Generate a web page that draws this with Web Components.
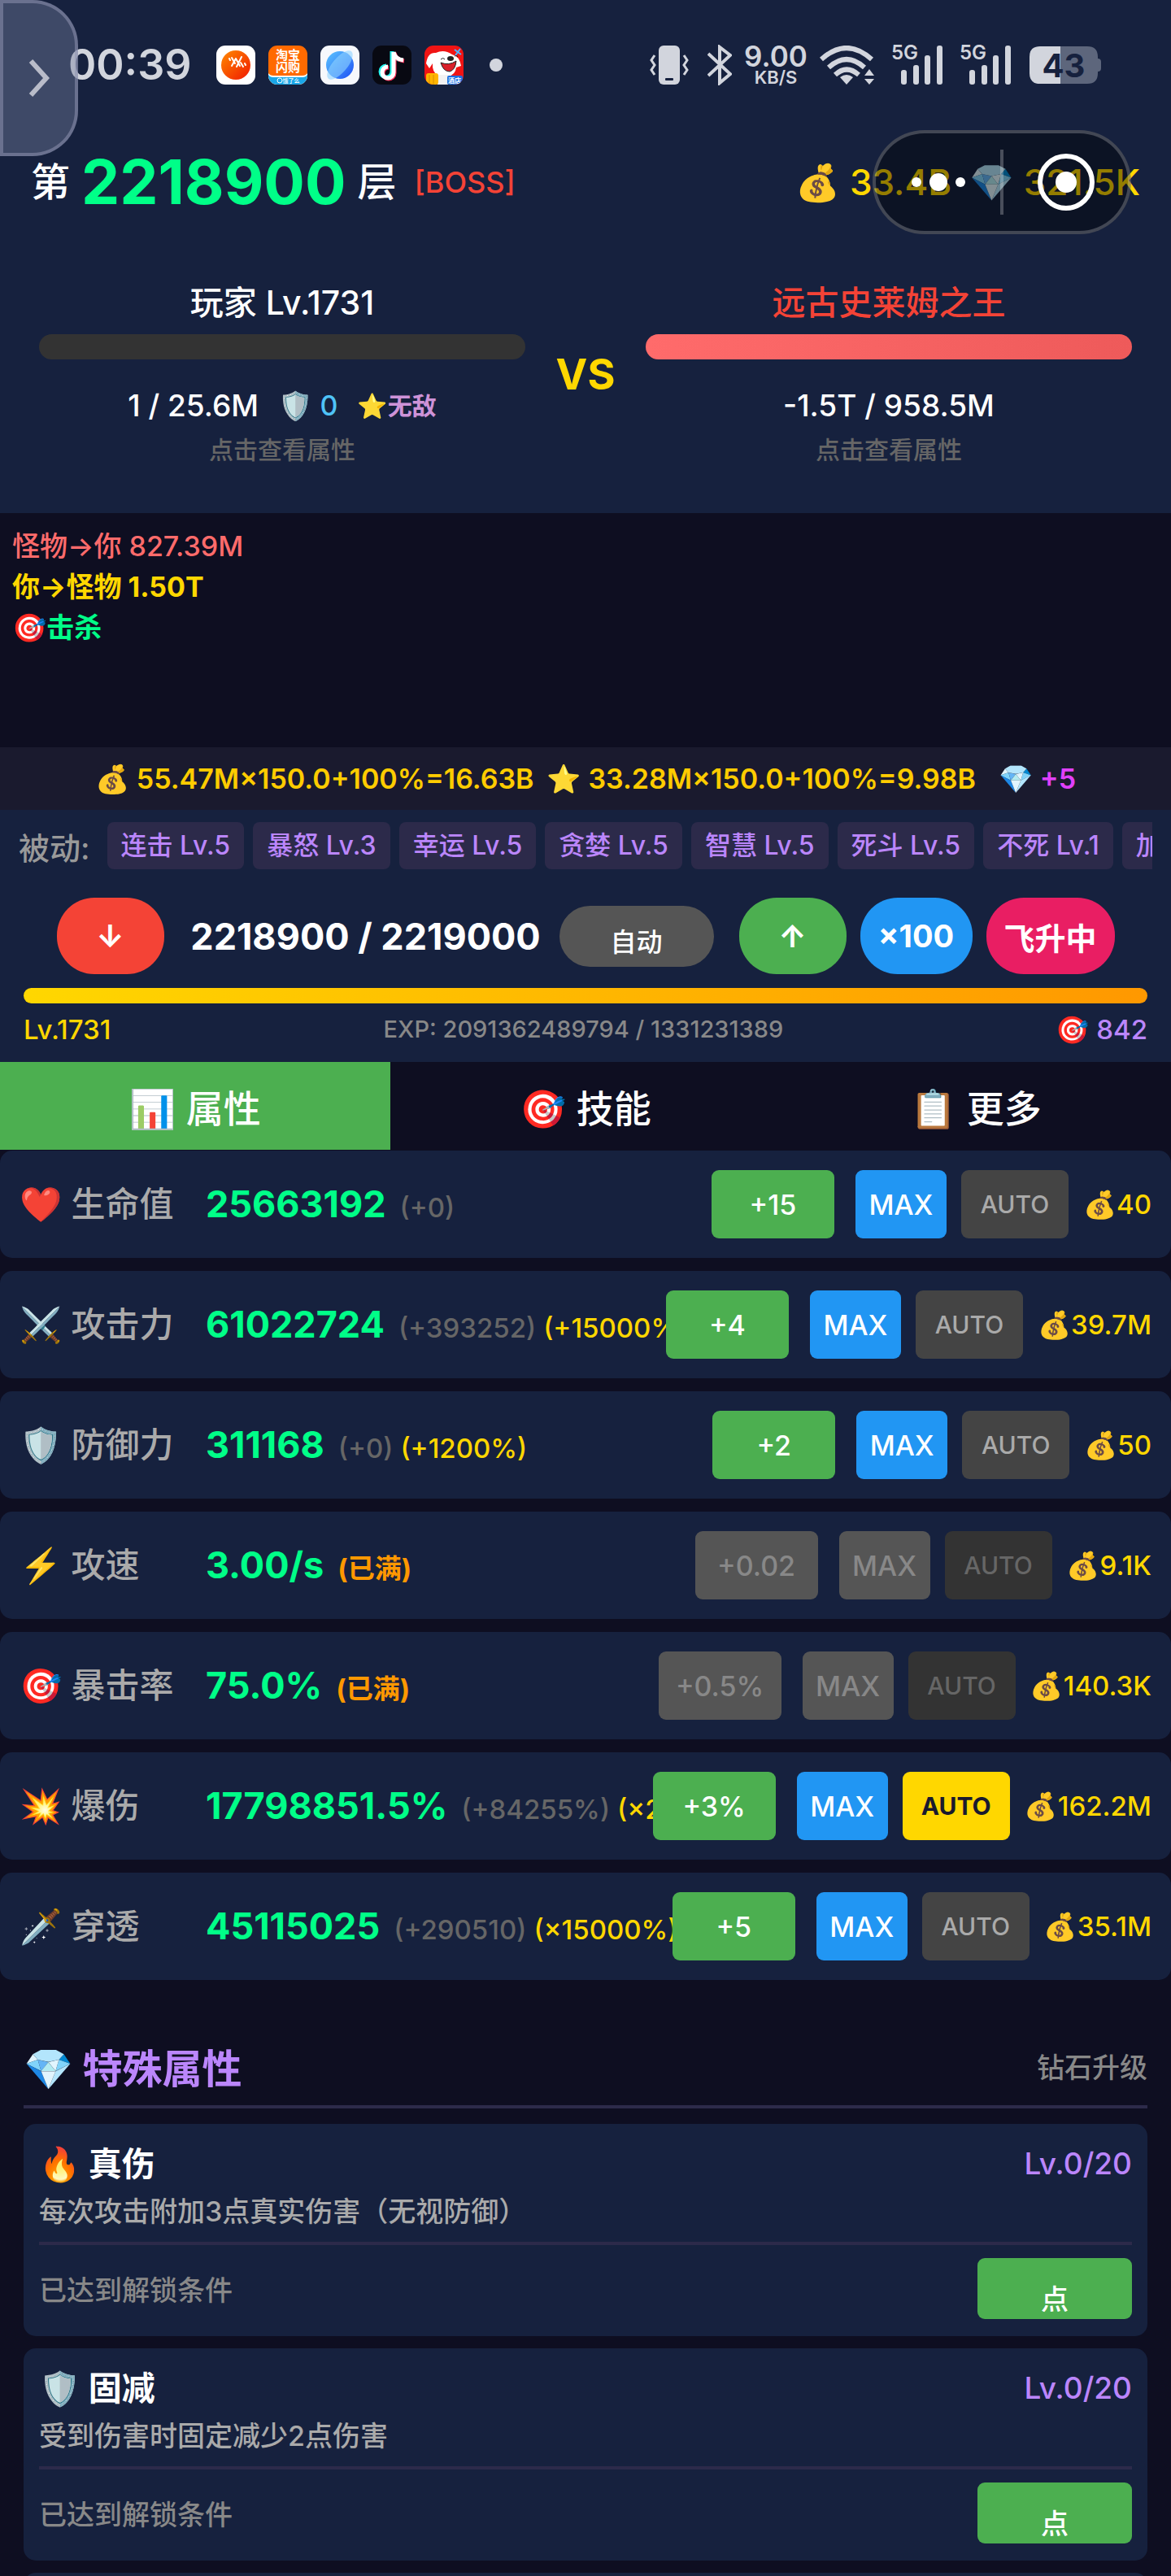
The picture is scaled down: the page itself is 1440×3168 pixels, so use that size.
<!DOCTYPE html>
<html lang="zh-CN">
<head>
<meta charset="utf-8">
<meta name="viewport" content="width=device-width, initial-scale=1">
<title>放置爬塔</title>
<style>
html, body { margin: 0; background: #0e0e21; }
body { font-family: Inter, "Noto Sans CJK SC", "Noto Color Emoji", sans-serif; font-weight: 500; color: #fff; }
</style>
</head>
<body>
<game-app></game-app>
<script>
const define = (name, html, setup) => {
  const tpl = document.createElement('template');
  tpl.innerHTML = `<style>*{box-sizing:border-box}button{font:inherit;color:inherit;border:0;margin:0;padding:0;cursor:pointer}</style>` + html;
  customElements.define(name, class extends HTMLElement {
    constructor() {
      super();
      this.attachShadow({ mode: 'open' }).append(tpl.content.cloneNode(true));
    }
    connectedCallback() { if (setup) setup(this, this.shadowRoot); }
  });
};

/* Phone status bar */
define('signal-bars', `
<style>
:host{display:block;position:relative;width:64px;height:48px}
span{position:absolute;left:0;top:-4px;font-size:24px;line-height:26px;font-weight:600}
svg{display:block}
</style>
<span>5G</span>
<svg width="64" height="48" viewBox="0 0 64 48" fill="currentColor"><rect x="12" y="30" width="7" height="18" rx="3"/><rect x="27" y="24" width="7" height="24" rx="3"/><rect x="41" y="12" width="7" height="36" rx="3"/><rect x="56" y="0" width="7" height="48" rx="3"/></svg>`);

define('app-icons', `
<style>
:host{display:flex;gap:16px;align-items:center}
svg{display:block;width:48px;height:48px;border-radius:11px}
text{font-family:"Noto Sans CJK SC",sans-serif;fill:#fff;text-anchor:middle}
i{width:16px;height:16px;border-radius:50%;background:#d2d5dd;margin-left:16px}
</style>
<svg viewBox="0 0 48 48"><defs><linearGradient id="a" x1="0" y1="0" x2="1" y2="1"><stop offset="0" stop-color="#ff8a00"/><stop offset="1" stop-color="#f01800"/></linearGradient></defs><rect width="48" height="48" fill="#fff"/><circle cx="24" cy="24" r="18" fill="url(#a)"/><path d="M16 16l1 2M19 15l4 7M24 16l5 9M19 25l5-9M25 26l6-12M30 21l3 5M35 22l1 2" stroke="#fff" stroke-width="2" stroke-linecap="round" fill="none"/></svg>
<svg viewBox="0 0 48 48"><rect width="48" height="48" fill="#ff6a00"/><path d="M0 34q2 3 6 3h36q4 0 6-3v14H0z" fill="#fff"/><path d="M0 36q2 3 6 3h36q4 0 6-3v12H0z" fill="#1aa7e8"/><text x="24" y="17" font-size="15" font-weight="700">淘宝</text><text x="24" y="32" font-size="15" font-weight="700">闪购</text><circle cx="14" cy="43" r="3" fill="none" stroke="#fff" stroke-width="1"/><text x="28" y="46" font-size="7">饿了么</text></svg>
<svg viewBox="0 0 48 48"><defs><linearGradient id="b" x1="0" y1="0" x2="1" y2="1"><stop offset="0" stop-color="#5cc6ff"/><stop offset="1" stop-color="#1d50f5"/></linearGradient></defs><rect width="48" height="48" fill="#f6f8fc"/><circle cx="24" cy="24" r="17" fill="url(#b)"/><ellipse cx="24" cy="24" rx="22" ry="9" transform="rotate(-50 24 24)" fill="#8fd3ff" opacity=".6"/></svg>
<svg viewBox="0 0 48 48"><rect width="48" height="48" fill="#080912"/><g fill="none" stroke-width="5"><path d="M24 7v25a7 7 0 1 1-7-7M24 8q2 9 12 10" stroke="#25f4ee"/><path d="M27 9v25a7 7 0 1 1-7-7M27 9q2 9 12 10" stroke="#fe2c55"/><path d="M26 8v25a7 7 0 1 1-7-7M26 8q2 9 12 10" stroke="#fff"/></g></svg>
<svg viewBox="0 0 48 48"><rect width="48" height="48" fill="#f01414"/><path d="M2 22Q4 8 14 9q10-5 20 2 9 2 11 14l-6 2q-1 9-10 11H17Q9 32 10 22l-4 6z" fill="#fff"/><path d="M20 21q10 4 19-2-1 11-8 13-8 0-11-11z" fill="#d9202a" stroke="#222"/><ellipse cx="32" cy="16" rx="4" ry="3" fill="#222"/><path d="M20 17q3-3 5 0M37 13q3-2 4 1" stroke="#222" fill="none"/><path d="M16 36h13v12H16z" fill="#f2f2f2"/><rect x="2" y="34" width="15" height="14" rx="3" fill="#ffb400"/><path d="M6 36v12M11 36v12" stroke="#d88c00"/><rect x="28" y="37" width="19" height="11" rx="2" fill="#1e6fe0"/><text x="37" y="46" font-size="8" font-weight="700">酒店</text><path d="M37 5l8 6M44 4l-6 8" stroke="#4db3ff" stroke-width="2"/></svg>
<i></i>`);

define('status-bar', `
<style>
:host{display:flex;align-items:center;justify-content:space-between;height:160px;padding:0 86px 0 84px;color:#d2d5dd}
.left,.right{display:flex;align-items:center}
time{font-size:52px;line-height:60px;font-weight:600;width:182px}
svg{display:block}
.speed{display:flex;flex-direction:column;align-items:center;font-weight:600;width:80px;margin:0 14px}
.speed b{font-size:35px;line-height:30px;font-weight:600}
.speed small{font-size:22px;line-height:22px}
signal-bars{margin-left:20px}
.battery{position:relative;margin-left:22px;width:88px;height:46px}
.battery span{position:absolute;inset:0 4px 0 0;display:flex;align-items:center;justify-content:center;font-size:40px;font-weight:700;color:#16213e}
</style>
<div class="left"><time>00:39</time><app-icons></app-icons></div>
<div class="right">
<svg width="50" height="48" viewBox="0 0 50 48"><rect x="12" width="26" height="48" rx="6" fill="currentColor"/><rect x="20" y="40" width="10" height="3" rx="1" fill="#16213e"/><path d="M7 12l-4 6 4 6-4 6 4 6M43 12l4 6-4 6 4 6-4 6" fill="none" stroke="currentColor" stroke-width="3"/></svg>
<svg style="margin-left:22px" width="30" height="50" viewBox="0 0 30 50"><path d="M1 11l27 25-13 11V3l13 10L1 38" fill="none" stroke="currentColor" stroke-width="4"/></svg>
<div class="speed"><b>9.00</b><small>KB/S</small></div>
<svg width="68" height="48" viewBox="0 0 68 48"><g fill="none" stroke="currentColor" stroke-width="6"><path d="M2 17q31-28 62 0"/><path d="M11 27q22-20 44 0"/><path d="M19 36q14-13 29 0"/></g><path d="M25 39q8-6 16 0l-8 9z" fill="currentColor"/><path d="M55 37l6-8 6 8zM55 41h12l-6 7z" fill="currentColor"/></svg>
<signal-bars></signal-bars><signal-bars></signal-bars>
<div class="battery"><svg width="88" height="46" viewBox="0 0 88 46"><path d="M38 0H13Q0 0 0 13v20q0 13 13 13h25z" fill="#d2d5dd"/><path d="M38 0h33q13 0 13 13v2q4 0 4 4v8q0 4-4 4v2q0 13-13 13H38z" fill="#5d667c"/></svg><span>43</span></div>
</div>`);

define('drawer-handle', `
<style>
:host{display:block;position:absolute;left:0;top:0}
button{display:flex;align-items:center;justify-content:center;width:96px;height:192px;border:4px solid rgba(143,148,176,.55);border-radius:0 56px 56px 0;background:rgba(120,128,160,.42)}
svg{display:block}
</style>
<button aria-label="展开"><svg width="26" height="48" viewBox="0 0 26 48"><path d="M3 3l19 21L3 45" fill="none" stroke="#b9bcc9" stroke-width="6"/></svg></button>`);

define('mini-capsule', `
<style>
:host{display:flex;position:absolute;right:49px;top:160px;width:318px;height:128px;border:4px solid rgba(255,255,255,.22);border-radius:64px;background:rgba(0,0,0,.42);align-items:center}
button{flex:1;height:80px;background:none;display:flex;align-items:center;justify-content:center}
button+button{border-left:4px solid rgba(255,255,255,.25)}
svg{display:block}
</style>
<button aria-label="菜单"><svg width="66" height="24" viewBox="0 0 66 24" fill="#fff"><circle cx="6" cy="12" r="6"/><circle cx="33" cy="12" r="11"/><circle cx="60" cy="12" r="6"/></svg></button>
<button aria-label="关闭"><svg width="70" height="70" viewBox="0 0 70 70"><circle cx="35" cy="35" r="32" fill="none" stroke="#fff" stroke-width="6"/><circle cx="35" cy="35" r="13" fill="#fff"/></svg></button>`);

define('stage-header', `
<style>
:host{display:flex;align-items:center;justify-content:space-between;height:128px;padding:0 38px}
.floor,.money{display:flex;align-items:center;white-space:pre}
.floor{font-size:48px;line-height:64px}
b{font-size:75px;margin:0 14px;color:#00ff88}
.boss{font-size:36px;color:#f44336;margin-left:22px}
.money{font-size:44px;color:#ffd700;gap:22px}
</style>
<div class="floor"><span>第</span><b>2218900</b><span>层</span><span class="boss">[BOSS]</span></div>
<div class="money"><span>💰 33.4B</span><span>💎 321.5K</span></div>`);

define('fighter-card', `
<style>
:host{display:flex;flex-direction:column;align-items:center;min-width:0}
.name{font-size:41px;line-height:50px}
:host([foe]) .name{color:#f44336}
.bar{align-self:stretch;height:31px;margin:14px 0 32px;border-radius:16px;background:#333;overflow:hidden}
:host([foe]) .bar{background:linear-gradient(90deg,#ff6b6b,#ee5a5a)}
.hp{display:flex;align-items:center;font-size:37px;line-height:50px;white-space:pre}
.hint{font-size:30px;line-height:40px;margin-top:9px;color:#666}
</style>
<div class="name"><slot name="name"></slot></div><div class="bar"></div><div class="hp"><slot></slot></div><div class="hint">点击查看属性</div>`);

define('battle-stage', `
<style>
:host{display:grid;grid-template-columns:1fr 148px 1fr;align-items:center;padding:59px 48px 58px}
.vs{text-align:center;font-size:52px;font-weight:700;color:#ffd700}
.sh{font-size:34px;color:#4fc3f7;margin-left:24px}
.inv{font-size:30px;font-weight:700;color:#ce93d8;margin-left:24px}
</style>
<fighter-card><span slot="name">玩家 Lv.1731</span>1 / 25.6M<span class="sh">🛡️ 0</span><span class="inv">⭐无敌</span></fighter-card>
<div class="vs">VS</div>
<fighter-card foe><span slot="name">远古史莱姆之王</span>-1.5T / 958.5M</fighter-card>`);

define('battle-log', `
<style>
:host{display:block;height:288px;padding:16px 16px 16px 15px;font-size:34px;line-height:50px;background:#0e0e21}
p{margin:0}.hit{color:#ff6b6b}.crit{color:#ffd700;font-weight:700}.kill{color:#00ff88;font-weight:700}
</style>
<p class="hit">怪物→你 827.39M</p><p class="crit">你→怪物 1.50T</p><p class="kill">🎯击杀</p>`);

define('reward-bar', `
<style>
:host{display:flex;justify-content:center;align-items:center;height:77px;background:#1a1a2e;color:#ffcc00;font-size:34px;font-weight:600;white-space:pre}
span+span{margin-left:16px}
span.gem{color:#e040fb;margin-left:28px}
</style>
<span>💰 55.47M×150.0+100%=16.63B</span><span>⭐ 33.28M×150.0+100%=9.98B</span><span class="gem">💎 +5</span>`);

define('passive-list', `
<style>
:host{display:flex;align-items:center;gap:11px;padding:15px 23px;overflow:hidden;white-space:nowrap;font-size:32px}
.label{font-size:38px;color:#999;margin-right:10px}
.chips{display:flex;gap:11px;overflow:hidden;flex:1}
.chips span{flex:none;height:58px;line-height:58px;padding:0 17px;border-radius:8px;background:#2c2a4a;color:#bb86fc}
</style>
<span class="label">被动:</span><div class="chips"></div>`, (el, root) => {
  root.querySelector('.chips').innerHTML = ['连击 Lv.5', '暴怒 Lv.3', '幸运 Lv.5', '贪婪 Lv.5', '智慧 Lv.5', '死斗 Lv.5', '不死 Lv.1', '加'].map(t => `<span>${t}</span>`).join('');
});

define('stage-controls', `
<style>
:host{display:flex;align-items:center;justify-content:center;padding-top:20px;gap:17px}
button{height:94px;width:132px;border-radius:46px;font-size:38px;font-weight:700;white-space:nowrap}
b{width:432px;margin:0 5px 0 15px;font-size:45px;text-align:center;white-space:nowrap}
.down{background:#f44336}
.auto{width:190px;height:75px;padding-top:10px;border-radius:38px;background:#555;font-size:32px;font-weight:500;margin-right:14px}
.up{background:#4caf50}.x{width:138px;background:#2196f3}.fly{width:158px;background:#e91e63}
</style>
<button class="down">↓</button><b>2218900 / 2219000</b><button class="auto">自动</button><button class="up">↑</button><button class="x">×100</button><button class="fly">飞升中</button>`);

define('exp-bar', `
<style>
:host{display:block;padding:17px 29px 20px}
.track{height:19px;border-radius:10px;background:linear-gradient(90deg,#ffd700,#ff9800);margin-bottom:12px}
.row{display:flex;justify-content:space-between;align-items:center;font-size:33px;line-height:40px;color:#ffd700}
.exp{font-size:29px;color:#888}.sp{color:#bb86fc}
</style>
<div class="track"></div><div class="row"><span>Lv.1731</span><span class="exp">EXP: 2091362489794 / 1331231389</span><span class="sp">🎯 842</span></div>`);

define('tab-bar', `
<style>
:host{display:grid;grid-template-columns:repeat(3,1fr);height:108px;background:#0e0e21}
button{background:none;font-size:46px;font-weight:500}
button[aria-selected=true]{background:#4caf50}
</style>
<button role="tab" aria-selected="true">📊 属性</button><button role="tab" aria-selected="false">🎯 技能</button><button role="tab" aria-selected="false">📋 更多</button>`);

define('stat-row', `
<style>
:host{display:flex;align-items:center;height:132px;padding:0 24px;border-radius:15px;background:#16213e;white-space:pre;flex:none}
.name{flex:none;width:229px;font-size:42px;line-height:60px;color:#aaa}
.val{flex:1;min-width:0;overflow:hidden;padding-top:4px;font-size:33px;line-height:60px}
.val b{font-size:45px;color:#00ff88;margin-right:17px}
.add{color:#666;margin-right:9px}.mul{color:#ffd700}.full{color:#ff9800;font-weight:700}
button{flex:none;height:84px;border-radius:9px;font-weight:500;font-size:34px}
.up{width:151px;background:#4caf50}.max{width:112px;background:#2196f3;margin:0 18px 0 26px}
.auto{width:132px;background:#444;color:#aaa;font-size:30px}
.auto.on{background:#ffd700;color:#1a1a2e;font-weight:700}
button:disabled{background:#555;color:#888}
.auto:disabled{background:#333;color:#666}
.cost{flex:none;font-size:33px;color:#ffd700;margin-left:18px}
</style>
<span class="name"></span><span class="val"></span><button class="up"></button><button class="max">MAX</button><button class="auto">AUTO</button><span class="cost"></span>`, (el, root) => {
  const $ = s => root.querySelector(s), a = n => el.getAttribute(n) || '';
  $('.name').textContent = a('icon') + ' ' + a('label');
  $('.val').innerHTML = `<b>${a('value')}</b>` + (a('add') && `<span class="add">${a('add')}</span>`) + (a('mul') && `<span class="mul">${a('mul')}</span>`) + (el.hasAttribute('full') ? '<span class="full">(已满)</span>' : '');
  $('.up').textContent = a('step');
  $('.cost').textContent = '💰' + a('cost');
  if (el.hasAttribute('full')) root.querySelectorAll('button').forEach(b => b.disabled = true);
  if (el.hasAttribute('auto')) $('.auto').classList.add('on');
});

define('special-card', `
<style>
:host{display:block;flex:none;height:261px;padding:20px 19px;border-radius:15px;background:#16213e}
.head,.foot{display:flex;justify-content:space-between;align-items:center;white-space:pre}
.head{font-size:41px;line-height:58px}
.lv{font-size:37px;color:#bb86fc}
.desc{font-size:34px;line-height:50px;padding:5px 0 12px;color:#aaa;border-bottom:4px solid #2c2a4a}
.foot{font-size:34px;color:#888;padding-top:16px}
button{width:190px;height:75px;padding-top:22px;border-radius:9px;background:#4caf50;color:#fff;font-weight:500}
</style>
<div class="head"><b><slot name="title"></slot></b><span class="lv">Lv.0/20</span></div>
<div class="desc"><slot></slot></div>
<div class="foot"><span>已达到解锁条件</span><button>点</button></div>`);

define('special-section', `
<style>
:host{display:flex;flex-direction:column;gap:15px;padding:62px 29px 0}
header{display:flex;justify-content:space-between;align-items:center;height:96px;padding-bottom:6px;border-bottom:4px solid #2c2a4a;margin-bottom:4px;white-space:pre}
h2{margin:0;font-size:49px;color:#bb86fc}
small{font-size:34px;color:#888}
.next{flex:none;height:261px;border-radius:15px;background:#16213e}
</style>
<header><h2>💎 特殊属性</h2><small>钻石升级</small></header>
<special-card><span slot="title">🔥 真伤</span>每次攻击附加3点真实伤害（无视防御）</special-card>
<special-card><span slot="title">🛡️ 固减</span>受到伤害时固定减少2点伤害</special-card>
<div class="next"></div>`);

define('game-app', `
<style>
:host{display:flex;flex-direction:column;position:relative;height:100vh;overflow:hidden}
.top,.mid{background:#16213e;flex:none}
battle-log,reward-bar,tab-bar{flex:none}
.list{flex:1;min-height:0;overflow:hidden}
.stats{display:flex;flex-direction:column;gap:16px;padding-top:1px}
</style>
<div class="top"><status-bar></status-bar><stage-header></stage-header><battle-stage></battle-stage></div>
<battle-log></battle-log>
<reward-bar></reward-bar>
<div class="mid"><passive-list></passive-list><stage-controls></stage-controls><exp-bar></exp-bar></div>
<tab-bar role="tablist"></tab-bar>
<div class="list">
<div class="stats">
<stat-row icon="❤️" label="生命值" value="25663192" add="(+0)" step="+15" cost="40"></stat-row>
<stat-row icon="⚔️" label="攻击力" value="61022724" add="(+393252)" mul="(+15000%)" step="+4" cost="39.7M"></stat-row>
<stat-row icon="🛡️" label="防御力" value="311168" add="(+0)" mul="(+1200%)" step="+2" cost="50"></stat-row>
<stat-row icon="⚡" label="攻速" value="3.00/s" full step="+0.02" cost="9.1K"></stat-row>
<stat-row icon="🎯" label="暴击率" value="75.0%" full step="+0.5%" cost="140.3K"></stat-row>
<stat-row icon="💥" label="爆伤" value="17798851.5%" add="(+84255%)" mul="(×2" step="+3%" auto cost="162.2M"></stat-row>
<stat-row icon="🗡️" label="穿透" value="45115025" add="(+290510)" mul="(×15000%)" step="+5" cost="35.1M"></stat-row>
</div>
<special-section></special-section>
</div>
<drawer-handle></drawer-handle>
<mini-capsule></mini-capsule>`);
</script>
</body>
</html>
